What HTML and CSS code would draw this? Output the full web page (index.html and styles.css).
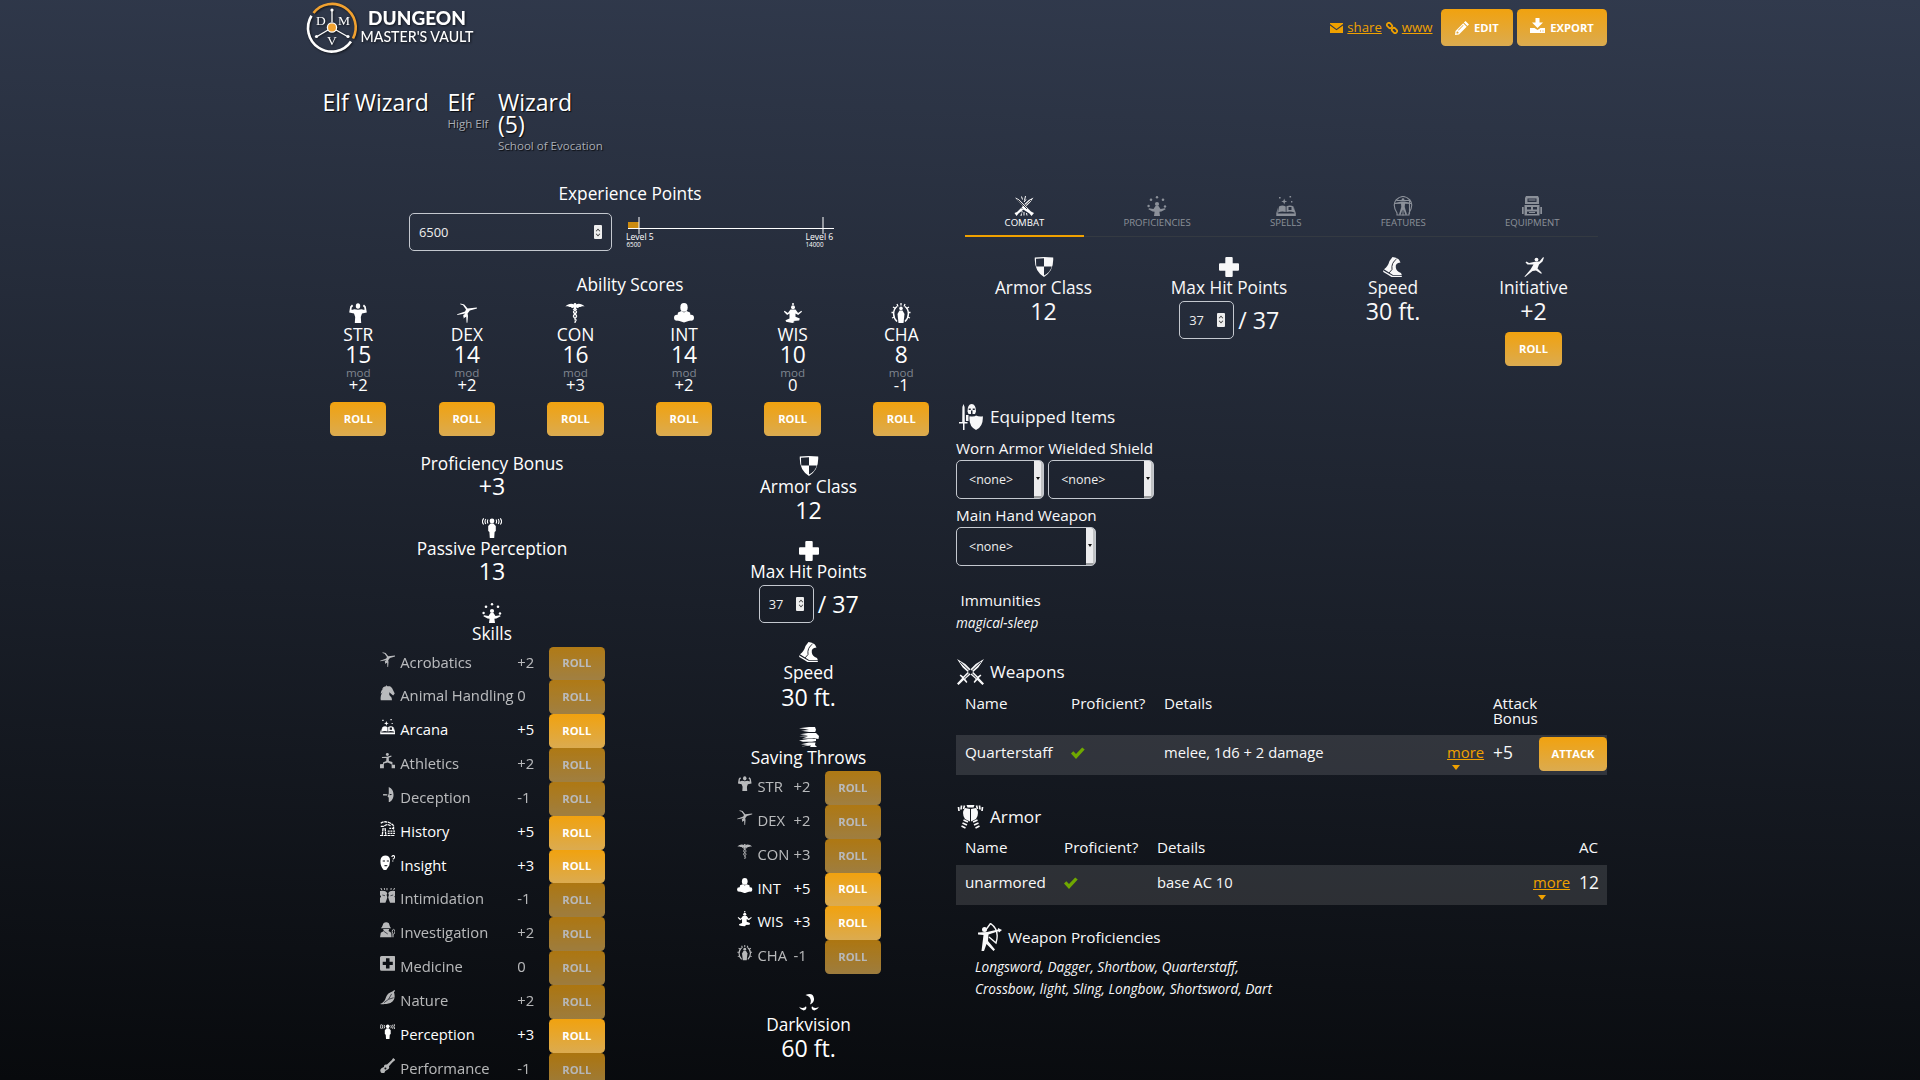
FILE: index.html
```
<!DOCTYPE html>
<html lang="en">
<head>
<meta charset="utf-8">
<title>Elf Wizard</title>
<link rel="stylesheet" href="styles.css">
</head>
<body>
<svg class="defs" width="0" height="0">
  <symbol id="str" viewBox="0 0 20 20"><ellipse cx="10" cy="3" rx="2.2" ry="2.8"/><path d="M4 1.5 5.200 3 3.600 4.800 3.600 7 6.400 6.200 10 6.800 13.600 6.200 16.400 7 16.400 4.800 14.800 3 16 1.500 17.800 3.500 18.800 9.600 14 10.500 12.800 14 13.200 20H6.800L7.200 14 6 10.500 1.200 9.600 2.200 3.500Z"/></symbol>
  <symbol id="dex" viewBox="0 0 20 20"><path d="M3.4.4 7.2 1.4 10.6 5.4 19.8 4.6 20 5.6 12.8 7.6 10.6 10.6 11 13 10.4 19.8H9.6L9.2 13.4 6.400 15.400 7 13 8.2 10.6.2 12 .2 11.2 8 8.4 9 6.4 6 2.2 3.2 1.2Z"/><circle cx="7.7" cy="12.7" r="1.500"/></symbol>
  <symbol id="con" viewBox="0 0 20 20"><path d="M.4 3.600C3 .6 7 0 9.4 1.8h1.2C13 0 17 .6 19.6 3.600 17 2.600 16 4.200 14 4 13.500 5.500 12 5 11 4.6V6H9V4.6C8 5 6.500 5.500 6 4 4 4.200 3 2.600.4 3.600Z"/><circle cx="10" cy="1.300" r="1.3"/><path class="ln" d="M10 6V20" stroke-dasharray="1.500 1"/><path class="ln" d="M8 6C12.500 8 12.500 9.500 10 11S8 14 10 15.500 11 18 10 19M12 6C7.500 8 7.500 9.500 10 11S12 14 10 15.500"/></symbol>
  <symbol id="int" viewBox="0 0 20 20"><ellipse cx="10" cy="4.400" rx="3.700" ry="4.400"/><path d="M4 9.500 7.500 8 10 9.600 12.500 8 16 9.500 16.600 12.500 16 17.500 10 19.600 4 17.500 3.400 12.500Z"/><circle cx="3" cy="14.800" r="3"/><circle cx="17" cy="14.800" r="3"/></symbol>
  <symbol id="wis" viewBox="0 0 20 20"><circle cx="10" cy="1" r="1"/><circle cx="10" cy="4.200" r="2"/><path d="M7.500 6.600h5l2.600 3.400 3.300-2.200.6.900-3.800 3.300-2.700-1.600v3.400l4.300 1.600-.6 2.200-6 .4 1.500 1-2.300 1-6.300-1.200-.6-1.600 4-1.800V10.400l-2.400 1.600L.9 8.700l.6-.9L4.900 10Z"/></symbol>
  <symbol id="cha" viewBox="0 0 20 20"><path fill="none" stroke="currentColor" stroke-width="1.500" d="M6 18.500C1.500 14 1.500 7 6 3.500M14 18.500C18.500 14 18.500 7 14 3.500"/><path stroke="currentColor" stroke-width="1.300" d="M6 1 7 3.500M14 1 13 3.500M10 0V2.500M2 4 4.500 5.500M18 4 15.500 5.500M.5 9.500H3M19.500 9.500H17M1 15 3.500 14M19 15 16.500 14"/><circle cx="10" cy="5.400" r="1.800"/><path d="M8.500 7.500h3L13.500 11 12.500 20h-5L6.500 11Z"/></symbol>
  <symbol id="perc" viewBox="0 0 20 20"><circle cx="10" cy="3" r="2.400"/><path d="M8.500 5.500h3L13.800 8V13L12.600 14 12.200 20H7.800L7.400 14 6.200 13V8Z"/><path class="ln" d="M6 1.500Q4.800 3.500 6 5.500M3.800 1Q2.200 3.500 3.800 6M1.700.3Q-.8 3.500 1.700 6.500M14 1.500Q15.200 3.500 14 5.500M16.200 1Q17.800 3.500 16.200 6M18.300.3Q20.800 3.500 18.300 6.500"/></symbol>
  <symbol id="skills" viewBox="0 0 20 20"><circle cx="10" cy="1.200" r="1.200"/><circle cx="4" cy="3.700" r="1.300"/><circle cx="16" cy="3.700" r="1.300"/><circle cx="1.600" cy="10" r="1.200"/><circle cx="18" cy="10.500" r="1.200"/><circle cx="10" cy="8" r="2.100"/><path d="M8.500 10h3l2 3 4.500-.8.600 1.100-4.200 2.200-2 .3.600 4.200H7l.600-4.200-2-.3L1.400 13.300 2 12.200l4.500.8Z"/></symbol>
  <symbol id="arcana" viewBox="0 0 20 20"><path d="M8.200 2.500 9 4.800 11.200 5.500 9 6.300 8.200 8.600 7.400 6.300 5.200 5.500 7.400 4.800ZM3 1h1.600v1.600H3ZM13.500 0h1.600v1.600h-1.600ZM15 5h1.400v1.400H15Z"/><path fill-rule="evenodd" d="M3 10.500Q6.500 8.500 9.700 10.500V16Q6 14.800 2 16.400ZM10.500 10.300Q14 8.500 17.500 10.500L18.500 16.400Q14 14.800 10.500 16ZM12.500 11v3h3v-3ZM.300 17.300 1.800 11.500 1.700 17.500H18.500L18 11.500 19.800 17.300V20H.300Z"/></symbol>
  <symbol id="horse" viewBox="0 0 20 20"><path d="M8 0 9.500 1.500 13 1.500 15.500 4 19 11 17 13.500 15 12 12 9.500 12 13 15 16.500 15.500 20H1C0 13 3 10 4.500 8.500L1 11.500Q1 6.500 4.500 4.500L2.500 5Q4.500 1.200 8 1.600Z"/></symbol>
  <symbol id="athl" viewBox="0 0 20 20"><circle cx="9.500" cy="2" r="1.900"/><path d="M2.500 5 9 4.800 14.500 3.300 15 4.600 11.300 6.200 11.500 10.200 16 11.500V15h4v5h-5v-5.500L10 12.300 5 13.600V20H0v-5.500l3.800-.3V12.300L8 10.200 8.300 6.500 2.500 6.300Z"/></symbol>
  <symbol id="decep" viewBox="0 0 20 20"><path fill-rule="evenodd" d="M11.300 0Q17.500 3 17.500 10T11.300 20V13.500L9.800 12.500 11.300 8.500ZM12.500 8.800V10.800L16 10Z"/><path d="M4 9 9.500 9.500V11L4 11Z"/></symbol>
  <symbol id="hist" viewBox="0 0 20 20"><path fill="none" stroke="currentColor" stroke-width="1.700" stroke-dasharray="4 .8" d="M1 3Q5 0 10 1.500T17.500 6V12M1 7H5Q9 2.500 14 6.500M4 9 3 18M6.500 9 7.500 18M0 19H20"/><path stroke="currentColor" stroke-width="1.600" stroke-dasharray="2.500 1" d="M10 13H20M10 16H20M12 9.500H19"/></symbol>
  <symbol id="insight" viewBox="0 0 20 20"><path fill-rule="evenodd" d="M6.500.500Q13 .500 13 7L12 13.500 8 19.500H5Q.500 15 .500 8T6.500.500ZM3.500 7v1.500h3V7ZM8.800 7v1.500h2.700V7ZM5 14q2.500 1.500 5-.5L7.500 13Z"/><path fill="none" stroke="currentColor" stroke-width="1.500" d="M15 2.500Q17-.5 18.500 1.500T16.500 5.500M16.500 7V8.500"/></symbol>
  <symbol id="intim" viewBox="0 0 20 20"><path d="M0 4Q7 2.500 9.400 6.500L8.500 9 9.400 12 8.500 15 7 19H0V13L1.500 11 0 9ZM20 4Q13 2.500 10.600 6.500L11.500 9 10.600 12 11.500 15 13 19H20V13L18.500 11 20 9Z"/><path stroke="currentColor" stroke-width="1.300" d="M1 0 2.500 2.500M5.500 0 6 2.500M9 0V3M14.500 0 14 2.500M19 0 17.500 2.500"/><path class="cut" d="M3 9 6.500 10M17 9 13.500 10"/></symbol>
  <symbol id="invest" viewBox="0 0 20 20"><path d="M2.500 6.500 4.500 1.500Q8 -1 11.500 1.500L13 6.500 14.500 8H1ZM4 9H12L11 11.500 14.500 14 15 20H0L1 14 5 11.500Z"/><path class="cut" d="M5 12 10 15.500"/><ellipse cx="17.500" cy="12.500" rx="1.700" ry="3" fill="none" stroke="currentColor" stroke-width="1.200"/><path d="M16 15.500h1.500v4.500h-1.500Z"/></symbol>
  <symbol id="med" viewBox="0 0 20 20"><path fill-rule="evenodd" d="M2 0H18Q20 0 20 2V17Q20 19 18 19H2Q0 19 0 17V2Q0 0 2 0ZM7.700 3V7.300H3.500V11.700H7.700V16H12.300V11.700H16.500V7.300H12.300V3Z"/></symbol>
  <symbol id="nature" viewBox="0 0 20 20"><path d="M0 18Q6 16 7.500 10T16.500 1.500L18.500 0 19.500 1 18 3Q20.500 10 16.500 14.500T6 18Q3 19 0 18Z"/><path class="cut" d="M5 16.500 11 12 15 5M11 12 17.500 10"/></symbol>
  <symbol id="perf" viewBox="0 0 20 20"><path d="M17 0 20 2.500 16.500 5 11.500 10.500Q13 14 9.500 15T5.500 19.500Q1.500 20.500.500 17T5 11.500Q5 7.500 9 8.500L15 3Z"/><circle class="hole" cx="7" cy="13.500" r="1.300"/></symbol>
  <symbol id="shield" viewBox="0 0 20 20"><path fill-rule="evenodd" d="M.800.600Q10-.4 19.200.600 20 14 10 20 0 14 .800.600ZM2 1.800Q2 6 2.300 9.500H10V1.200Q6 1.200 2 1.800ZM10 9.500V18.600Q16.500 15 17.700 9.500Z"/></symbol>
  <symbol id="plus" viewBox="0 0 20 20"><path d="M6.300 1Q6.300 0 7.300 0h5.400Q13.700 0 13.700 1V6.300H19Q20 6.300 20 7.300v5.400Q20 13.700 19 13.700H13.700V19Q13.700 20 12.700 20H7.300Q6.300 20 6.300 19V13.700H1Q0 13.700 0 12.700V7.300Q0 6.300 1 6.300H6.300Z"/></symbol>
  <symbol id="boot" viewBox="0 0 20 20"><path d="M9.500 0 13 .700Q16.500 2 17.500 5.500 12 6 12.800 10.500 13.200 14 18 16L18.800 18H10L1 12.200Q5 9.500 6.500 4ZM0 13.300 6 16.800 9.500 18.800H18.800V20H8.500L5 17.800.300 15Z"/><path class="cut" d="M13.500 2Q8 6 9 12.500L6 16"/></symbol>
  <symbol id="saves" viewBox="0 0 20 20"><path d="M0 1.200 10 0h6l1 2.800-.8 2.200H4L10 4 2 3.400 10 2.400ZM1 7.300 9 6h8l3 3-.5 3-4.500-.8-2 .2H3L9 9.600 0 9.300 9 8.200ZM0 13.500 9 12h8v2L13 14.800H4ZM2 17.300 10 15.500h6.500L16 18l2 2H11L12 18.500 2 19.500 9 18Z"/></symbol>
  <symbol id="dark" viewBox="0 0 20 20"><path d="M6.500 1Q14 -2 15 4.500 15.500 8.500 11 10.500 14 3.500 6.500 1ZM0 12.800Q4.500 15.500 7 12.200 8.500 15.500 4.800 16.500 1.500 16 0 12.800ZM20 12.800Q15.500 15.500 13 12.200 11.500 15.500 15.200 16.500 18.500 16 20 12.800Z"/></symbol>
  <symbol id="combat" viewBox="0 0 20 20"><path d="M1 1.500Q4 2 7.500 6L17 15.500 20 17 17.500 20 15.500 17.500 7 12 9 10ZM19.500 1.500Q15 3 10.500 8L12.500 10Q17 6 19.500 1.500ZM7.500 11.500 3 16 .500 17 2.500 20 4.500 17.500 9.500 13.500Z"/><path stroke="currentColor" stroke-width="1" d="M7.500.500 8.500 3.500M11.500 0 10.500 4.500M10 6 12 3.500M8 15V16.500M10 16V19.500M7.500 17.500 7 20M12.500 17 13 19.500"/><path class="cut" d="M3.500 3.500 13 13M17 4 11 9.500"/></symbol>
  <symbol id="feat" viewBox="0 0 20 20"><path fill="none" stroke="currentColor" stroke-width="1.100" d="M4 19V17Q-1 9 3 4 10-3 17 4 21 9 16 17V19ZM3.500 4.500H16.500V18"/><circle cx="10" cy="3.700" r="1.400"/><path d="M8.500 5.500 1.500 7V8L8 7.800 8.300 11 6 18.500 7.500 19 9.500 13.500V19.500H10.500V13.500L12.500 19 14 18.500 11.700 11 12 7.800 18.500 8V7L11.500 5.500Z"/></symbol>
  <symbol id="equip" viewBox="0 0 20 20"><path fill-rule="evenodd" d="M4 0H16L17 2V8H3V2ZM5.500 2.500V6h9V2.500ZM2.500 9h15v10.500h-15ZM5 11v2.500h4V11ZM11 11v2.500h4V11ZM5 15.500V18h10V15.500ZM0 11h1.700v7H0ZM18.300 11H20v7h-1.700Z"/><path d="M6.500 3.500H13.500V4.500H6.500ZM7 16h6v1H7Z"/></symbol>
  <symbol id="init" viewBox="0 0 20 20"><circle cx="12.500" cy="2.600" r="1.900"/><path d="M20 .500 18.500 4.500 15 7.500 13.500 11.500 17.500 15.500 17.500 17 12 13.500 8.500 14 1 20 .500 19.500 6.500 12.500 9.500 7.500 3.500 7.500 1.500 5.500 2.500 4.500 5 6 11 4.800 15.500 4.500 19 .300Z"/></symbol>
  <symbol id="knight" viewBox="0 0 24 26"><path d="M4.500 0 5.600 3 5.800 18H8.500V19.500H5.500V26H4V19.500H0V18H3.200L3.400 3Z"/><path fill-rule="evenodd" d="M8.500 7.500Q8.500 0 12.700 0T17 7.500L16 10H13.500V6.500H12V10H9.500ZM9.700 4.500V6H11.800V4.500ZM13.700 4.500V6H15.800V4.500Z"/><path d="M10.500 12.200Q16 12.800 17 11.500 20 12.800 23.800 12.200 24.500 22.500 17 26 9.500 22.500 10.500 12.200ZM7 11 9.500 11V17H7Z"/></symbol>
  <symbol id="swords" viewBox="0 0 26 26"><path d="M0 0 8 5 20 17.500 22.500 15.500 23.500 16.500 21 19 26 24.500 24.500 26 19.500 21 17 24 16 23 18 20 5.500 8.500ZM26 0 18 5 6 17.500 3.500 15.500 2.500 16.500 5 19 0 24.500 1.500 26 6.500 21 9 24 10 23 8 20 20.500 8.500Z"/><path class="cut" d="M3 3 19 19M23 3 14.500 11.500M11.500 14.500 7 19"/></symbol>
  <symbol id="armor" viewBox="0 0 26 24"><path d="M9 0H17L16 2.500H10ZM7.500 3 12.500 4V16.500L7.500 14Q3.500 8 7.500 3ZM18.500 3 13.500 4V16.500L18.500 14Q22.500 8 18.500 3Z"/><path stroke="currentColor" stroke-width="1.700" d="M7 .500 6 4M4 .500 3.500 4.500M1 2 1.500 6M19 .500 20 4M22 .500 22.500 4.500M25 2 24.500 6M6 15 10.500 17M5 18 9.500 20M4 21 8 23M20 15 15.500 17M21 18 16.500 20M22 21 18 23"/></symbol>
  <symbol id="archer" viewBox="0 0 24 28"><circle cx="6.500" cy="6.500" r="2.500"/><path d="M0 9.500 9 9 20 6.500V5L24 7 21 9.500 20.300 8.300 10.500 11.500 10 18 17 26.500 15.500 28 8.500 21 6 28H3.500L5.500 12 0 11.500Z"/><path fill="none" stroke="currentColor" stroke-width="1.400" d="M12.500.500Q22 7 18 20L11 14M12.500.500 7 8"/></symbol>
</svg>

<div class="page">
  <header class="top">
    <svg class="logo" width="172" height="55" viewBox="0 0 172 55">
      <g fill="none" stroke="#fff" stroke-width="2.600">
        <path d="M5.500 15.700A23.600 23.600 0 0 0 45 41.500"/>
        <path stroke="#f0a130" d="M7.500 13A23.600 23.600 0 0 1 47 38.500"/>
        <path stroke-width="1.300" d="M26 22V10M22 30 11 36.500M30 30 41.500 36.500"/>
      </g>
      <g fill="#fff"><circle cx="26" cy="10" r="1.600"/><circle cx="10.500" cy="36.500" r="1.600"/><circle cx="42" cy="36.500" r="1.600"/></g>
      <circle cx="26" cy="27.500" r="4.600" fill="#f0a130" stroke="#fff" stroke-width="1.300"/>
      <g class="lg-serif"><text x="10" y="25">D</text><text x="32" y="25">M</text><text x="21" y="45">V</text></g>
      <text class="lg-1" x="62" y="25" textLength="98">DUNGEON</text>
      <text class="lg-2" x="54.500" y="42" textLength="113" lengthAdjust="spacingAndGlyphs">MASTER'S VAULT</text>
    </svg>
    <nav class="actions">
      <svg width="13" height="10" viewBox="0 0 13 10"><path d="M0 0H13V1L6.500 6 0 1ZM0 2.500 6.500 7.300 13 2.500V10H0Z"/></svg>
      <a class="a1">share</a>
      <svg width="12" height="12" viewBox="0 0 12 12"><g fill="none" stroke="currentColor" stroke-width="1.700"><rect x="-2.800" y="-2" width="5.600" height="4" rx="1.800" transform="translate(3.500 3.500) rotate(45)"/><rect x="-2.800" y="-2" width="5.600" height="4" rx="1.800" transform="translate(8.500 8.500) rotate(45)"/></g></svg>
      <a class="a2">www</a>
      <button class="btn big edit"><svg width="14" height="14" viewBox="0 0 14 14"><path fill-rule="evenodd" d="M10.500 0 14 3.500 12.400 5.100 8.900 1.600ZM8.200 2.300 11.700 5.800 4 13.500 0 14 .500 10ZM1.500 11v1.500H3L3.800 11.700 2.300 10.200ZM8 4 3 9l.5.500 5-5Z"/></svg>EDIT</button>
      <button class="btn big export"><svg width="15" height="15" viewBox="0 0 15 15"><path fill-rule="evenodd" d="M5.500 0h4v4.500H13L7.500 10 2 4.500H5.500ZM0 10H4.500L7.500 12 10.500 10H15V15H0ZM10 12.500v1h1v-1ZM12.500 12.500v1h1v-1Z"/></svg>EXPORT</button>
    </nav>
  </header>

  <section class="summary">
    <div class="s-name"><div class="title">Elf Wizard</div></div>
    <div class="s-race"><div class="title">Elf</div><div class="sub">High Elf</div></div>
    <div class="s-class"><div class="title">Wizard<br>(5)</div><div class="sub">School of Evocation</div></div>
  </section>

  <main class="cols">
    <section class="left">
      <div class="h">Experience Points</div>
      <div class="xp">
        <div class="field xp-in"><span>6500</span><i class="spin"></i></div>
        <svg width="220" height="38" viewBox="0 0 220 38">
          <rect x="8" y="9" width="11" height="6" fill="#cb8b10"/>
          <path d="M8 15h206v1H8ZM18.500 4h1v17h-1ZM202.500 4h1v17h-1Z" fill="#fff"/>
          <text class="t1" x="6" y="27">Level 5</text><text class="t2" x="6.500" y="33.700">6500</text>
          <text class="t1" x="185.500" y="27">Level 6</text><text class="t2" x="185.500" y="33.700">14000</text>
        </svg>
      </div>
      <div class="h ab-h">Ability Scores</div>
      <div class="abilities">
        <div><svg class="ic"><use href="#str"/></svg><b>STR</b><strong>15</strong><small>mod</small><em>+2</em><button class="btn">ROLL</button></div>
        <div><svg class="ic"><use href="#dex"/></svg><b>DEX</b><strong>14</strong><small>mod</small><em>+2</em><button class="btn">ROLL</button></div>
        <div><svg class="ic"><use href="#con"/></svg><b>CON</b><strong>16</strong><small>mod</small><em>+3</em><button class="btn">ROLL</button></div>
        <div><svg class="ic"><use href="#int"/></svg><b>INT</b><strong>14</strong><small>mod</small><em>+2</em><button class="btn">ROLL</button></div>
        <div><svg class="ic"><use href="#wis"/></svg><b>WIS</b><strong>10</strong><small>mod</small><em>0</em><button class="btn">ROLL</button></div>
        <div><svg class="ic"><use href="#cha"/></svg><b>CHA</b><strong>8</strong><small>mod</small><em>-1</em><button class="btn">ROLL</button></div>
      </div>
      <div class="subcols">
        <div class="sc-a">
          <div class="stat"><div class="h">Proficiency Bonus</div><div class="v">+3</div></div>
          <div class="stat"><svg class="ic"><use href="#perc"/></svg><div class="h">Passive Perception</div><div class="v">13</div></div>
          <div class="stat"><svg class="ic"><use href="#skills"/></svg><div class="h">Skills</div></div>
          <div class="rows skills">
            <div class="row dim"><svg><use href="#dex"/></svg><span>Acrobatics</span><span>+2</span><button class="btn">ROLL</button></div>
            <div class="row dim"><svg><use href="#horse"/></svg><span>Animal Handling</span><span>0</span><button class="btn">ROLL</button></div>
            <div class="row"><svg><use href="#arcana"/></svg><span>Arcana</span><span>+5</span><button class="btn">ROLL</button></div>
            <div class="row dim"><svg><use href="#athl"/></svg><span>Athletics</span><span>+2</span><button class="btn">ROLL</button></div>
            <div class="row dim"><svg><use href="#decep"/></svg><span>Deception</span><span>-1</span><button class="btn">ROLL</button></div>
            <div class="row"><svg><use href="#hist"/></svg><span>History</span><span>+5</span><button class="btn">ROLL</button></div>
            <div class="row"><svg><use href="#insight"/></svg><span>Insight</span><span>+3</span><button class="btn">ROLL</button></div>
            <div class="row dim"><svg><use href="#intim"/></svg><span>Intimidation</span><span>-1</span><button class="btn">ROLL</button></div>
            <div class="row dim"><svg><use href="#invest"/></svg><span>Investigation</span><span>+2</span><button class="btn">ROLL</button></div>
            <div class="row dim"><svg><use href="#med"/></svg><span>Medicine</span><span>0</span><button class="btn">ROLL</button></div>
            <div class="row dim"><svg><use href="#nature"/></svg><span>Nature</span><span>+2</span><button class="btn">ROLL</button></div>
            <div class="row"><svg><use href="#perc"/></svg><span>Perception</span><span>+3</span><button class="btn">ROLL</button></div>
            <div class="row dim"><svg><use href="#perf"/></svg><span>Performance</span><span>-1</span><button class="btn">ROLL</button></div>
          </div>
        </div>
        <div class="sc-b">
          <div class="stat"><svg class="ic"><use href="#shield"/></svg><div class="h">Armor Class</div><div class="v">12</div></div>
          <div class="stat"><svg class="ic"><use href="#plus"/></svg><div class="h">Max Hit Points</div><div class="hp"><div class="field"><span>37</span><i class="spin"></i></div><div class="v">/ 37</div></div></div>
          <div class="stat"><svg class="ic"><use href="#boot"/></svg><div class="h">Speed</div><div class="v">30 ft.</div></div>
          <div class="stat"><svg class="ic"><use href="#saves"/></svg><div class="h">Saving Throws</div></div>
          <div class="rows saves">
            <div class="row dim"><svg><use href="#str"/></svg><span>STR</span><span>+2</span><button class="btn">ROLL</button></div>
            <div class="row dim"><svg><use href="#dex"/></svg><span>DEX</span><span>+2</span><button class="btn">ROLL</button></div>
            <div class="row dim"><svg><use href="#con"/></svg><span>CON</span><span>+3</span><button class="btn">ROLL</button></div>
            <div class="row"><svg><use href="#int"/></svg><span>INT</span><span>+5</span><button class="btn">ROLL</button></div>
            <div class="row"><svg><use href="#wis"/></svg><span>WIS</span><span>+3</span><button class="btn">ROLL</button></div>
            <div class="row dim"><svg><use href="#cha"/></svg><span>CHA</span><span>-1</span><button class="btn">ROLL</button></div>
          </div>
          <div class="stat"><svg class="ic"><use href="#dark"/></svg><div class="h">Darkvision</div><div class="v">60 ft.</div></div>
        </div>
      </div>
    </section>

    <section class="right">
      <nav class="tabs">
        <div class="tab on"><svg class="ic"><use href="#combat"/></svg>COMBAT</div>
        <div class="tab"><svg class="ic"><use href="#skills"/></svg>PROFICIENCIES</div>
        <div class="tab"><svg class="ic"><use href="#arcana"/></svg>SPELLS</div>
        <div class="tab"><svg class="ic"><use href="#feat"/></svg>FEATURES</div>
        <div class="tab"><svg class="ic"><use href="#equip"/></svg>EQUIPMENT</div>
      </nav>
      <div class="quick">
        <div class="stat"><svg class="ic"><use href="#shield"/></svg><div class="h">Armor Class</div><div class="v">12</div></div>
        <div class="stat"><svg class="ic"><use href="#plus"/></svg><div class="h">Max Hit Points</div><div class="hp"><div class="field"><span>37</span><i class="spin"></i></div><div class="v">/ 37</div></div></div>
        <div class="stat"><svg class="ic"><use href="#boot"/></svg><div class="h">Speed</div><div class="v">30 ft.</div></div>
        <div class="stat"><svg class="ic"><use href="#init"/></svg><div class="h">Initiative</div><div class="v">+2</div><button class="btn">ROLL</button></div>
      </div>
      <div class="sec eq"><svg width="24" height="26"><use href="#knight"/></svg>Equipped Items</div>
      <div class="sels">
        <label>Worn Armor<div class="field sel w1"><span>&lt;none&gt;</span><i></i></div></label>
        <label>Wielded Shield<div class="field sel w2"><span>&lt;none&gt;</span><i></i></div></label>
      </div>
      <div class="sels second">
        <label>Main Hand Weapon<div class="field sel w3"><span>&lt;none&gt;</span><i></i></div></label>
      </div>
      <div class="imm">Immunities</div>
      <div class="it">magical-sleep</div>

      <div class="sec wp"><svg width="27" height="26" viewBox="0 0 26 26" preserveAspectRatio="none"><use href="#swords"/></svg>Weapons</div>
      <div class="thead weapons"><span>Name</span><span>Proficient?</span><span>Details</span><span></span><span>Attack Bonus</span></div>
      <div class="trow weapons"><span>Quarterstaff</span><svg class="ck" width="14" height="12" viewBox="0 0 14 12"><path d="M0 6.500 2.300 4.200 5 7 11.200.500 13.700 2.500 5 12Z"/></svg><span class="det">melee, 1d6 + 2 damage</span><a class="more">more<i></i></a><span class="num">+5</span><button class="btn">ATTACK</button></div>

      <div class="sec ar"><svg width="27" height="24"><use href="#armor"/></svg>Armor</div>
      <div class="thead armors"><span>Name</span><span>Proficient?</span><span>Details</span><span></span><span>AC</span></div>
      <div class="trow armors"><span>unarmored</span><svg class="ck" width="14" height="12" viewBox="0 0 14 12"><path d="M0 6.500 2.300 4.200 5 7 11.200.500 13.700 2.500 5 12Z"/></svg><span class="det">base AC 10</span><a class="more">more<i></i></a><span class="num">12</span></div>

      <div class="sec pf"><svg width="24" height="28"><use href="#archer"/></svg>Weapon Proficiencies</div>
      <div class="it list">Longsword, Dagger, Shortbow, Quarterstaff,<br>Crossbow, light, Sling, Longbow, Shortsword, Dart</div>
    </section>
  </main>
</div>
</body>
</html>
```
FILE: styles.css
```
* { box-sizing: border-box; }
html, body { margin: 0; height: 1080px; overflow: hidden; }
body {
  background: linear-gradient(182deg, #313a4d, #080a0d);
  color: #fff;
  font-family: "Open Sans", "Noto Sans", sans-serif;
  font-size: 15.25px;
}
svg { fill: currentColor; display: block; flex: none; }
.defs { position: absolute; }
.ln { fill: none; stroke: currentColor; stroke-width: 1.1; }
.cut { fill: none; stroke: #181c25; stroke-width: .9; }
.hole { fill: #0c0e12; }
button, i, em, b, small, strong { font: inherit; }
.page { width: 1303px; margin-left: 304px; height: 1080px; overflow: hidden; }

.btn {
  display: flex; align-items: center; justify-content: center;
  width: 56.4px; height: 34px; padding: 0;
  border: 0; border-radius: 4.5px;
  background: linear-gradient(#f1a20f, #dbab50);
  color: #fff; font-weight: 700; font-size: 11.2px; line-height: 16px;
}

/* header */
.top { height: 55px; display: flex; justify-content: space-between; align-items: flex-start; }
.logo { margin: 0 0 0 1.7px; overflow: visible; filter: drop-shadow(1px 1px 1px rgba(0,0,0,.6)); }
.lg-serif { font: 13.5px "Liberation Serif", serif; }
.lg-1 { font: 900 19px Lato, sans-serif; }
.lg-2 { font: 500 15.5px Lato, sans-serif; }
.actions { display: flex; align-items: center; padding-top: 9px; color: #f0a100; font-size: 13.2px; }
.actions a { text-decoration: underline; margin-left: 4px; margin-top: -1px; }
.a1 { margin-right: 4px; }
.a2 { margin-right: 8.500px; }
.btn.big { height: 37px; }
.edit { width: 71.500px; margin-right: 4.500px; }
.edit svg { margin-right: 5px; }
.export { width: 90px; }
.export svg { margin: -4px 5px 0 0; }

/* character summary */
.summary { display: flex; height: 126.500px; padding: 36px 0 0 18.500px; text-shadow: 1px 1px 1px rgba(0,0,0,.8); }
.s-name { width: 125px; }
.s-race { width: 50.500px; }
.title { font-size: 23px; line-height: 22px; }
.sub { margin-top: 2.500px; font-size: 11.550px; line-height: 16px; color: #a9adb5; white-space: nowrap; }

.cols { display: grid; grid-template-columns: 652px 651px; }
.h { padding-top: 1px; height: 20px; font-size: 17.250px; line-height: 20px; text-align: center; white-space: nowrap; }
.v { font-size: 23.200px; line-height: 22px; text-align: center; white-space: nowrap; }
.ic { width: 20px; height: 20px; }

.field {
  display: flex; align-items: center; justify-content: space-between;
  height: 38px; border: 1px solid #c4c8cf; border-radius: 5px;
  font-size: 12.500px; padding: 0 9.500px; color: #eee;
}
.spin { width: 8px; height: 14px; border-radius: 1px; background: #eee; position: relative; }
.spin::before, .spin::after { content: ""; position: absolute; left: 2.500px; width: 3px; height: 3px; border: solid #333; }
.spin::before { top: 3.500px; border-width: 1px 0 0 1px; transform: rotate(45deg) scale(.8); }
.spin::after { bottom: 3.500px; border-width: 0 1px 1px 0; transform: rotate(45deg) scale(.8); }

.left > .h { padding-top: 2.500px; height: 22px; }
.xp { display: flex; margin: 9.500px 0 0 105px; }
.xp-in { width: 203px; margin-right: 8px; padding-left: 9px; }
.xp-in span { font-size: 12.900px; }
.t1 { font-size: 8.600px; }
.t2 { font-size: 6.300px; }
.left > .ab-h { margin-top: 22px; padding-top: 2px; }
.abilities { display: grid; grid-template-columns: repeat(6, 108.600px); margin-top: 8px; }
.abilities > div { display: flex; flex-direction: column; align-items: center; }
.abilities b { margin-top: 1px; font-size: 17.400px; line-height: 20px; }
.abilities strong { margin-top: .500px; font-size: 22.800px; line-height: 19px; }
.abilities small { margin-top: 3.500px; font-size: 11.600px; line-height: 12px; color: #7f858f; }
.abilities em { margin-top: -2px; font-size: 16.600px; line-height: 16px; }
.abilities .btn { margin-top: 9px; }

.subcols { display: grid; grid-template-columns: 376px 257px; }
.stat { display: flex; flex-direction: column; align-items: center; }
.stat .v { margin-top: 2px; }
.sc-a { padding-top: 17px; }
.sc-a .stat + .stat { margin-top: 21px; }
.sc-b { padding-top: 19.500px; }
.sc-b .stat + .stat { margin-top: 19.800px; }
.sc-b .v { margin-top: 3.300px; }
.hp { display: flex; align-items: center; margin-top: 4px; }
.hp .field { width: 55px; margin: 0 4px 0 .500px; padding: 0 8.500px 0 9px; }
.hp .field span { font-size: 12.900px; }
.stat .hp .v { margin-top: 0; }

.rows { margin-top: 3.500px; font-size: 14.750px; }
.row { display: grid; height: 33.850px; align-items: start; line-height: 20px; white-space: nowrap; }
.row svg { width: 15.500px; height: 15.500px; margin-top: 5px; }
.row span { padding-top: 5px; }
.row .btn { width: 100%; height: 33.850px; }
.skills { margin-left: 75.500px; }
.skills .row { grid-template-columns: 20.800px 117px 31.500px 56px; }
.saves { margin-left: 57px; }
.saves .row { grid-template-columns: 20.500px 36px 31px 56.500px; }
.dim { opacity: .7; }
.sc-b .rows + .stat { margin-top: 19.500px; }

/* right column */
.right { color: #f8f8f9; }
.tabs { display: flex; width: 633px; margin-left: 9px; padding-top: 14px; height: 55.500px; border-bottom: 1px solid #343a42; }
.tab { display: flex; flex-direction: column; align-items: center; padding: 0 39.600px; height: 41.500px; color: #8b9099; font-size: 9.580px; line-height: 14px; }
.tab.on { color: #fff; border-bottom: 2px solid #f0a100; }
.quick { display: grid; grid-template-columns: 175px 196px 132px 149px; align-items: start; height: 110px; margin-top: 20px; }
.quick .v { margin-top: 2.500px; }
.quick .hp { margin-top: 3.500px; }
.quick .btn { margin-top: 10px; }

.sec { display: flex; align-items: center; font-size: 17.200px; line-height: 20px; }
.eq { margin: 36.500px 0 0 2.500px; height: 26px; }
.eq svg { margin-right: 7.500px; }
.sels { display: flex; gap: 4px; margin-top: 8px; height: 67px; }
.sels label { line-height: 20px; white-space: nowrap; }
.second { margin-top: 0; }
.sel { margin-top: 2.500px; height: 38.500px; padding: 0 0 0 12px; overflow: hidden; background: #1c212c33; }
.sel span { padding-top: 1px; }
.sel i { align-self: stretch; width: 9px; background: #ececee; display: flex; align-items: center; justify-content: center; border-right: 2px solid #c0c2c4; border-bottom: 2px solid #9a9c9e; }
.sel i::before { content: ""; border: solid transparent; border-width: 3px 2.500px 0; border-top-color: #111; }
.w1 { width: 88px; } .w2 { width: 106px; } .w3 { width: 140px; }
.imm { margin: 18.500px 0 0 4.500px; line-height: 20px; }
.it { margin-top: 1.500px; font-style: italic; font-size: 13.600px; line-height: 22px; white-space: nowrap; }
.wp { margin: 25px 0 0 1px; }
.wp svg, .ar svg { margin-right: 6px; }
.thead, .trow { display: grid; }
.weapons { grid-template-columns: 106px 93px 283px 46px 46px 68px; }
.armors { grid-template-columns: 99px 93px 376px 46px 28px; }
.thead { padding-left: 9px; line-height: 14.500px; font-size: 15.200px; }
.thead.weapons { margin-top: 11.500px; height: 39px; }
.thead.armors { margin-top: 11.500px; height: 25px; }
.trow { height: 40px; padding-left: 9px; line-height: 20px; padding-top: 7px; background: rgba(255,255,255,.12); white-space: nowrap; }
.ck { fill: #6fa800; margin-top: 5px; }
.det { font-size: 14.750px; }
.more { color: #f0a100; text-decoration: underline; font-size: 14.850px; line-height: 20px; }
.more i { display: block; margin: 2.500px 0 0 5px; width: 0; border: solid transparent; border-width: 5px 4.500px 0; border-top-color: #f0a100; }
.num { font-size: 17.400px; }
.trow .btn { width: 68px; margin-top: -5px; }
.ar { margin: 29.500px 0 0 1px; }
.pf { margin: 18px 0 0 22px; height: 28px; font-size: 15.250px; }
.pf svg { margin-right: 6px; }
.list { margin: 4.500px 0 0 19px; }
```
